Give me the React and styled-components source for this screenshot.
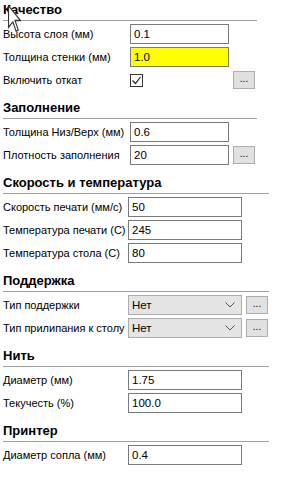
import React from "react";
import styled, { createGlobalStyle } from "styled-components";

const Global = createGlobalStyle`
  html, body { margin: 0; padding: 0; background: #fff; }
  body { font-family: "Liberation Sans", Arial, sans-serif; font-size: 11px; color: #000; }
`;

const Page = styled.div`
  position: relative;
  width: 290px;
  height: 491px;
  padding: 2px 0 0 3px;
  box-sizing: border-box;
  overflow: hidden;
`;

const Section = styled.section`
  width: ${(p) => p.$width}px;
  margin-top: ${(p) => (p.$first ? 0 : 10)}px;
`;

const Header = styled.div`
  font-weight: bold;
  font-size: 13px;
  line-height: 16px;
  padding-bottom: 2px;
  border-bottom: 1px solid #a0a0a0;
  white-space: nowrap;
`;

const Rows = styled.div`
  display: grid;
  grid-template-columns: ${(p) => p.$labelWidth}px ${(p) => p.$fieldWidth}px auto;
  column-gap: 4px;
  row-gap: 3px;
  margin-top: 3px;
  align-items: center;
`;

const Label = styled.div`
  white-space: nowrap;
  line-height: 20px;
  font-size: 11px;
`;

const Input = styled.div`
  box-sizing: border-box;
  height: 20px;
  border: 1px solid #7a7a7a;
  background: ${(p) => (p.$highlight ? "#ffff00" : "#fff")};
  padding: 0 3px;
  line-height: 18px;
  font-size: 11.5px;
`;

const Select = styled.div`
  box-sizing: border-box;
  height: 20px;
  border: 1px solid #adadad;
  background: #e5e5e5;
  padding: 0 6px 0 3px;
  line-height: 18px;
  font-size: 11.5px;
  display: flex;
  align-items: center;
  justify-content: space-between;
`;

const DotsButton = styled.div`
  box-sizing: border-box;
  width: 22px;
  height: 18px;
  border: 1px solid #adadad;
  background: #e1e1e1;
  font-size: 10px;
  line-height: 14px;
  text-align: center;
  justify-self: start;
`;

const Check = styled.div`
  box-sizing: border-box;
  width: 13px;
  height: 13px;
  border: 1px solid #333;
  background: #fff;
  display: flex;
  align-items: center;
  justify-content: center;
`;

const Cursor = styled.svg`
  position: absolute;
  left: 8px;
  top: 5px;
`;

const Chevron = () => (
  <svg width="10" height="6" viewBox="0 0 10 6">
    <path d="M0.5 0.5 L5 5 L9.5 0.5" fill="none" stroke="#555" strokeWidth="1" />
  </svg>
);

const sections = [
  {
    title: "Качество", width: 254, label: 123, field: 99,
    rows: [
      { label: "Высота слоя (мм)", value: "0.1" },
      { label: "Толщина стенки (мм)", value: "1.0", highlight: true },
      { label: "Включить откат", check: true, button: true },
    ],
  },
  {
    title: "Заполнение", width: 254, label: 123, field: 99,
    rows: [
      { label: "Толщина Низ/Верх (мм)", value: "0.6" },
      { label: "Плотность заполнения", value: "20", button: true },
    ],
  },
  {
    title: "Скорость и температура", width: 266, label: 121, field: 114,
    rows: [
      { label: "Скорость печати (мм/с)", value: "50" },
      { label: "Температура печати (С)", value: "245" },
      { label: "Температура стола (С)", value: "80" },
    ],
  },
  {
    title: "Поддержка", width: 266, label: 121, field: 114,
    rows: [
      { label: "Тип поддержки", select: "Нет", button: true },
      { label: "Тип прилипания к столу", select: "Нет", button: true },
    ],
  },
  {
    title: "Нить", width: 266, label: 121, field: 114,
    rows: [
      { label: "Диаметр (мм)", value: "1.75" },
      { label: "Текучесть (%)", value: "100.0" },
    ],
  },
  {
    title: "Принтер", width: 266, label: 121, field: 114,
    rows: [{ label: "Диаметр сопла (мм)", value: "0.4" }],
  },
];

export default function App() {
  return (
    <>
      <Global />
      <Page>
        {sections.map((s, i) => (
          <Section key={s.title} $width={s.width} $first={i === 0}>
            <Header>{s.title}</Header>
            <Rows $labelWidth={s.label} $fieldWidth={s.field}>
              {s.rows.map((r) => (
                <React.Fragment key={r.label}>
                  <Label>{r.label}</Label>
                  {r.check ? (
                    <Check>
                      <svg width="11" height="11" viewBox="0 0 11 11">
                        <path d="M1.5 5.5 L4.5 8.5 L9.5 2" fill="none" stroke="#222" strokeWidth="1.2" />
                      </svg>
                    </Check>
                  ) : r.select ? (
                    <Select>
                      <span>{r.select}</span>
                      <Chevron />
                    </Select>
                  ) : (
                    <Input $highlight={r.highlight}>{r.value}</Input>
                  )}
                  {r.button ? <DotsButton>...</DotsButton> : <span />}
                </React.Fragment>
              ))}
            </Rows>
          </Section>
        ))}
        <Cursor width="13" height="27" viewBox="0 0 12 20" preserveAspectRatio="none">
          <path d="M0.5 0.5 L0.5 16.5 L4.5 12.5 L7.5 19.5 L9.5 18.5 L6.5 11.5 L11.5 11.5 Z" fill="#fff" stroke="#333" strokeWidth="1" />
        </Cursor>
      </Page>
    </>
  );
}
